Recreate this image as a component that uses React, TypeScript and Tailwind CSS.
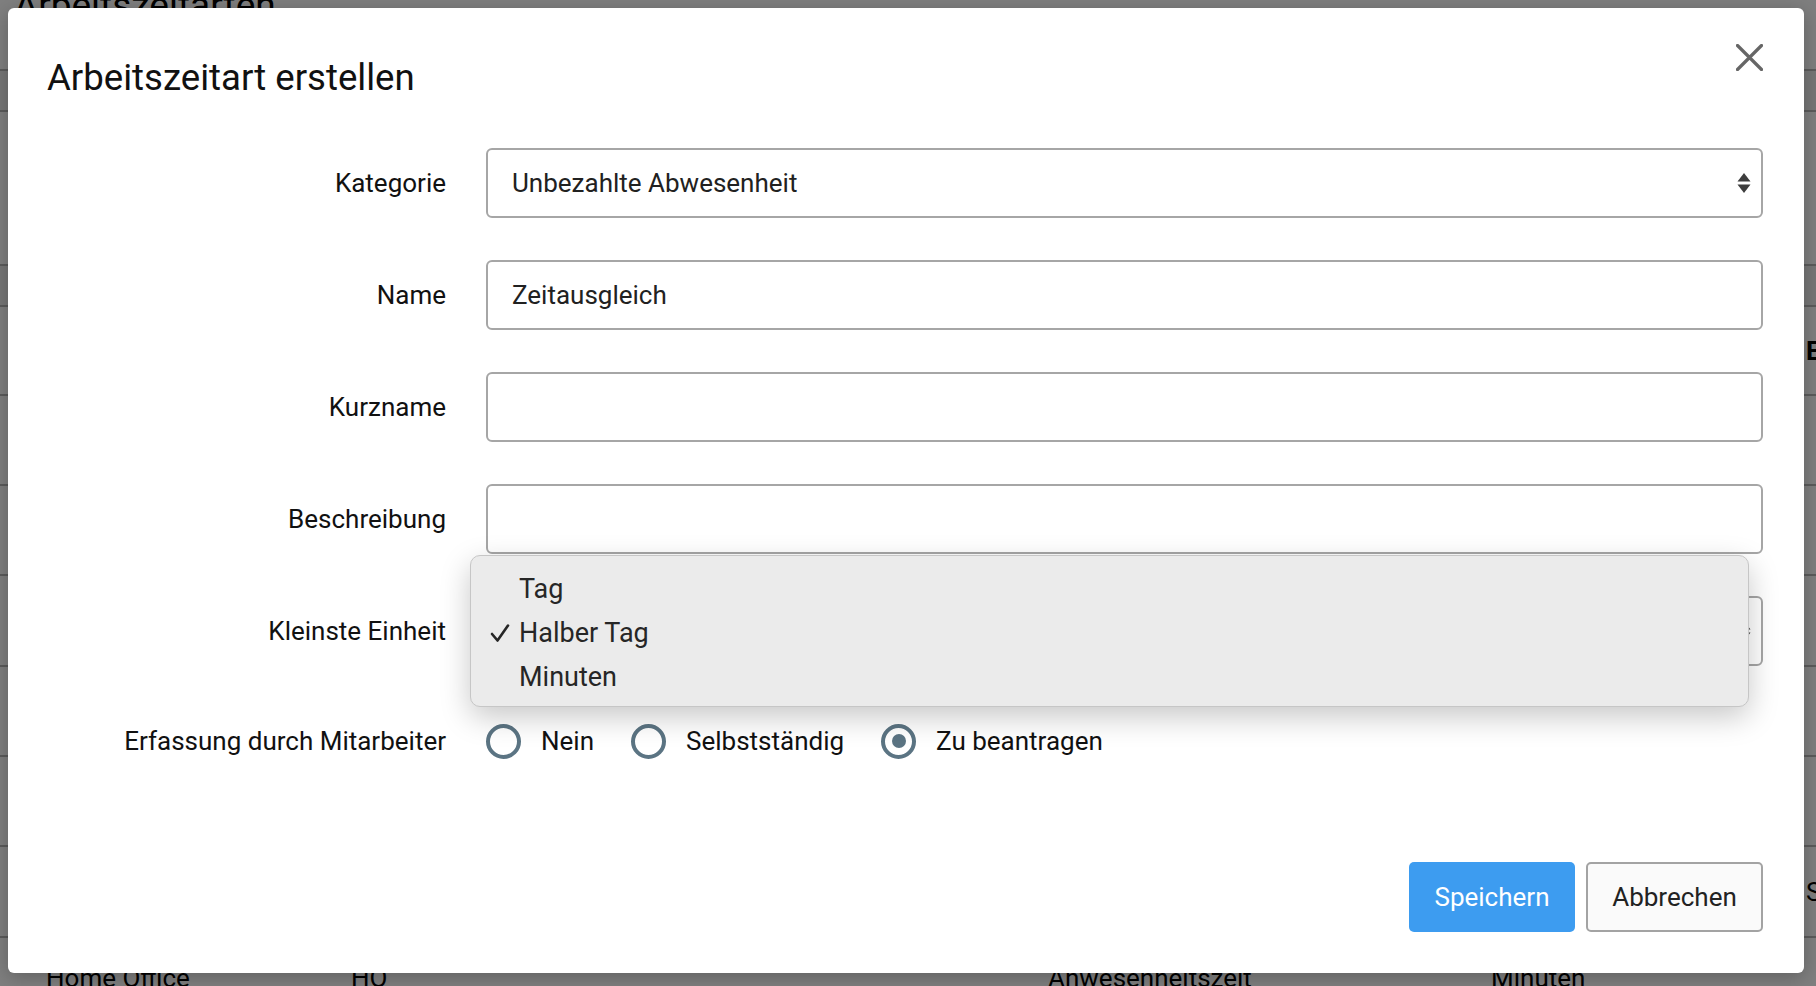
import React from "react";

const font = { fontFamily: "Roboto, 'Liberation Sans', sans-serif" };

function SelectArrows() {
  return (
    <svg width="14" height="22" viewBox="0 0 14 22" className="shrink-0">
      <path d="M7 1 L13.5 9.5 L0.5 9.5 Z" fill="#3d3d3d" />
      <path d="M7 21 L13.5 12.5 L0.5 12.5 Z" fill="#3d3d3d" />
    </svg>
  );
}

function Row({ label, children, h = "h-[70px]" }: { label: string; children: React.ReactNode; h?: string }) {
  return (
    <div className={`flex items-center ${h}`}>
      <div className="w-[399px] shrink-0 text-right text-[26px] text-[#111]">{label}</div>
      <div className="ml-[40px] flex-1 h-full flex items-center">{children}</div>
    </div>
  );
}

function TextInput({ value }: { value?: string }) {
  return (
    <div className="w-full h-full rounded-[6px] border-2 border-[#a6a6a6] bg-white flex items-center pl-[24px] text-[26px] text-[#212121]">
      {value}
    </div>
  );
}

function SelectBox({ value }: { value: string }) {
  return (
    <div className="w-full h-full rounded-[6px] border-2 border-[#a6a6a6] bg-white flex items-center justify-between pl-[24px] pr-[10px] text-[26px] text-[#212121]">
      <span>{value}</span>
      <SelectArrows />
    </div>
  );
}

function Radio({ label, checked }: { label: string; checked?: boolean }) {
  return (
    <div className="flex items-center">
      <div className="w-[35px] h-[35px] rounded-full border-4 border-[#5b7483] flex items-center justify-center bg-white">
        {checked && <div className="w-[14px] h-[14px] rounded-full bg-[#5b7483]" />}
      </div>
      <span className="ml-[20px] text-[26px] text-[#111]">{label}</span>
    </div>
  );
}

function Background() {
  const lineY = [69, 110, 264, 305, 394, 484, 574, 665, 755, 845, 936];
  return (
    <div className="relative w-[1816px] h-[986px] bg-white overflow-hidden" style={font}>
      <div className="absolute left-0 right-0 top-[69px] h-[41px] bg-[#eeeeee]" />
      <div className="absolute left-0 right-0 top-[264px] h-[41px] bg-[#eeeeee]" />
      {lineY.map((y) => (
        <div key={y} className="absolute left-0 right-0 h-[2px] bg-[#b8b8b8]" style={{ top: y }} />
      ))}
      <div className="absolute left-[14px] top-[-22px] text-[37px] text-black">Arbeitszeitarten</div>
      <div className="absolute left-[1806px] top-[332px] text-[26px] font-bold text-black">Einheit</div>
      <div className="absolute left-[1806px] top-[873px] text-[26px] text-black">Selbst</div>
      <div className="absolute top-[959px] left-0 right-0 text-[26px] text-black">
        <span className="absolute left-[46px]">Home Office</span>
        <span className="absolute left-[351px]">HO</span>
        <span className="absolute left-[1048px]">Anwesenheitszeit</span>
        <span className="absolute left-[1491px]">Minuten</span>
      </div>
    </div>
  );
}

export default function App() {
  return (
    <div className="relative w-[1816px] h-[986px] overflow-hidden" style={font}>
      <Background />
      <div className="absolute inset-0 bg-black/50 pt-[8px] pl-[8px] pr-[12px]">
        <div className="relative w-[1796px] h-[965px] bg-white rounded-[6px] shadow-[0_4px_20px_rgba(0,0,0,0.25)] pl-[39px] pr-[41px] flex flex-col">
          {/* header */}
          <div className="h-[140px] flex items-start justify-between pt-[36px]">
            <div className="mt-[15px] text-[36.6px] leading-[38px] text-[#111]">Arbeitszeitart erstellen</div>
            <button className="w-[27px] h-[27px] flex items-center justify-center">
              <svg width="27" height="27" viewBox="0 0 27 27">
                <path d="M1.5 1.5 L25.5 25.5 M25.5 1.5 L1.5 25.5" stroke="#666666" strokeWidth="3.2" strokeLinecap="round" />
              </svg>
            </button>
          </div>
          {/* form */}
          <div className="flex flex-col gap-[42px]">
            <Row label="Kategorie">
              <SelectBox value="Unbezahlte Abwesenheit" />
            </Row>
            <Row label="Name">
              <TextInput value="Zeitausgleich" />
            </Row>
            <Row label="Kurzname">
              <TextInput />
            </Row>
            <Row label="Beschreibung">
              <TextInput />
            </Row>
            <Row label="Kleinste Einheit">
              <SelectBox value="Halber Tag" />
            </Row>
            <Row label="Erfassung durch Mitarbeiter" h="h-[66px]">
              <div className="flex items-center gap-[37px]">
                <Radio label="Nein" />
                <Radio label="Selbstständig" />
                <Radio label="Zu beantragen" checked />
              </div>
            </Row>
          </div>
          {/* buttons */}
          <div className="mt-[88px] flex justify-end gap-[11px]">
            <button className="h-[70px] w-[166px] rounded-[5px] bg-[#3d9cf0] text-white text-[26px]">Speichern</button>
            <button className="h-[70px] w-[177px] rounded-[5px] bg-[#fafafa] border-2 border-[#a3a3a3] text-[#222] text-[26px]">Abbrechen</button>
          </div>

          {/* native select dropdown popup */}
          <div className="absolute left-[462px] top-[547px] w-[1279px] h-[152px] rounded-[10px] bg-[#ebebeb] border border-[#c6c6c6] shadow-[0_10px_30px_rgba(0,0,0,0.22)] pt-[11px]">
            {[
              { t: "Tag", c: false },
              { t: "Halber Tag", c: true },
              { t: "Minuten", c: false },
            ].map((o) => (
              <div key={o.t} className="h-[44px] flex items-center text-[27px] text-[#262626]">
                <div className="w-[48px] flex justify-end pr-[9px]">
                  {o.c && (
                    <svg width="20" height="20" viewBox="0 0 20 20">
                      <path d="M2 11 L7.5 17.5 L18 2.5" stroke="#262626" strokeWidth="2.6" fill="none" strokeLinecap="round" strokeLinejoin="round" />
                    </svg>
                  )}
                </div>
                <span>{o.t}</span>
              </div>
            ))}
          </div>
        </div>
      </div>
    </div>
  );
}
